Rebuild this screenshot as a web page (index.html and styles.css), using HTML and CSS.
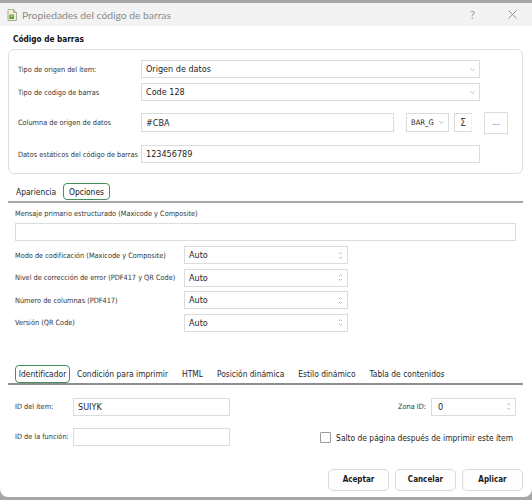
FILE: index.html
```html
<!DOCTYPE html>
<html lang="es">
<head>
<meta charset="utf-8">
<title>Propiedades del código de barras</title>
<link rel="stylesheet" href="styles.css">
</head>
<body>
<div class="dialog">
  <div class="titlebar">
    <svg class="app-icon" viewBox="0 0 10 12" width="10" height="12">
      <path d="M1 0.5 H6.5 L9.5 3.5 V11.5 H1 Z" fill="#f3eed6" stroke="#9a9a8a" stroke-width="0.8"/>
      <path d="M6.5 0.5 V3.5 H9.5" fill="none" stroke="#9a9a8a" stroke-width="0.8"/>
      <rect x="2.3" y="5.5" width="4.6" height="4.6" rx="0.6" fill="#5f9e3a"/>
      <rect x="3.3" y="6.5" width="2.6" height="1.2" fill="#b9dd8a"/>
    </svg>
    <span class="title">Propiedades del código de barras</span>
    <span class="help">?</span>
    <svg class="close" viewBox="0 0 9 9" width="9" height="9">
      <path d="M0.5 0.5 L8.5 8.5 M8.5 0.5 L0.5 8.5" stroke="#8a8a8a" stroke-width="0.9" fill="none"/>
    </svg>
  </div>

  <div class="content">
    <div class="section-title">Código de barras</div>

    <div class="group">
      <div class="row row-1">
        <span class="lbl lbl-main">Tipo de origen del ítem:</span>
        <div class="field select w-wide"><span class="val">Origen de datos</span><svg class="chev" viewBox="0 0 5 3" width="5" height="3"><path d="M0.5 0.5 L2.5 2.5 L4.5 0.5" fill="none" stroke="#a0a0a0" stroke-width="0.7"/></svg></div>
      </div>
      <div class="row row-2">
        <span class="lbl lbl-main">Tipo de codigo de barras</span>
        <div class="field select w-wide"><span class="val">Code 128</span><svg class="chev" viewBox="0 0 5 3" width="5" height="3"><path d="M0.5 0.5 L2.5 2.5 L4.5 0.5" fill="none" stroke="#a0a0a0" stroke-width="0.7"/></svg></div>
      </div>
      <div class="row row-3">
        <span class="lbl lbl-main">Columna de origen de datos</span>
        <div class="field w-col"><span class="val">#CBA</span></div>
        <div class="field select w-bar"><span class="val small">BAR_G</span><svg class="chev" viewBox="0 0 5 3" width="5" height="3"><path d="M0.5 0.5 L2.5 2.5 L4.5 0.5" fill="none" stroke="#a0a0a0" stroke-width="0.7"/></svg></div>
        <div class="field sigma">Σ</div>
        <div class="dots-btn">...</div>
      </div>
      <div class="row row-4">
        <span class="lbl lbl-main">Datos estáticos del código de barras</span>
        <div class="field w-wide"><span class="val">123456789</span></div>
      </div>
    </div>

    <div class="tabs tabs-top">
      <div class="tab tab-first">Apariencia</div>
      <div class="tab tab-active">Opciones</div>
    </div>

    <div class="panel options">
      <div class="lbl msg-lbl">Mensaje primario estructurado (Maxicode y Composite)</div>
      <div class="field w-msg"></div>
      <div class="spin-rows">
        <div class="row">
          <span class="lbl lbl-opt">Modo de codificación (Maxicode y Composite)</span>
          <div class="field spin w-spin"><span class="val">Auto</span><svg class="arrows" viewBox="0 0 5 9" width="5" height="9"><path d="M1 3 L2.5 1.5 L4 3 M1 6 L2.5 7.5 L4 6" fill="none" stroke="#a0a0a0" stroke-width="0.7"/></svg></div>
        </div>
        <div class="row">
          <span class="lbl lbl-opt">Nivel de corrección de error (PDF417 y QR Code)</span>
          <div class="field spin w-spin"><span class="val">Auto</span><svg class="arrows" viewBox="0 0 5 9" width="5" height="9"><path d="M1 3 L2.5 1.5 L4 3 M1 6 L2.5 7.5 L4 6" fill="none" stroke="#a0a0a0" stroke-width="0.7"/></svg></div>
        </div>
        <div class="row">
          <span class="lbl lbl-opt">Número de columnas (PDF417)</span>
          <div class="field spin w-spin"><span class="val">Auto</span><svg class="arrows" viewBox="0 0 5 9" width="5" height="9"><path d="M1 3 L2.5 1.5 L4 3 M1 6 L2.5 7.5 L4 6" fill="none" stroke="#a0a0a0" stroke-width="0.7"/></svg></div>
        </div>
        <div class="row">
          <span class="lbl lbl-opt">Versión (QR Code)</span>
          <div class="field spin w-spin"><span class="val">Auto</span><svg class="arrows" viewBox="0 0 5 9" width="5" height="9"><path d="M1 3 L2.5 1.5 L4 3 M1 6 L2.5 7.5 L4 6" fill="none" stroke="#a0a0a0" stroke-width="0.7"/></svg></div>
        </div>
      </div>
    </div>

    <div class="tabs tabs-bottom">
      <div class="tab2 tab2-active">Identificador</div>
      <div class="tab2">Condición para imprimir</div>
      <div class="tab2">HTML</div>
      <div class="tab2">Posición dinámica</div>
      <div class="tab2">Estilo dinámico</div>
      <div class="tab2">Tabla de contenidos</div>
    </div>

    <div class="panel ident">
      <div class="id-row id-row-1">
        <div class="id-left">
          <span class="lbl lbl-id">ID del ítem:</span>
          <div class="field w-id"><span class="val">SUIYK</span></div>
        </div>
        <div class="id-right">
          <span class="lbl zona-lbl">Zona ID:</span>
          <div class="field spin w-zona"><span class="val">0</span><svg class="arrows" viewBox="0 0 5 9" width="5" height="9"><path d="M1 3 L2.5 1.5 L4 3 M1 6 L2.5 7.5 L4 6" fill="none" stroke="#a0a0a0" stroke-width="0.7"/></svg></div>
        </div>
      </div>
      <div class="id-row id-row-2">
        <div class="id-left">
          <span class="lbl lbl-id">ID de la función:</span>
          <div class="field w-id"></div>
        </div>
        <label class="check">
          <span class="box"></span>
          <span class="check-text">Salto de página después de imprimir este ítem</span>
        </label>
      </div>
    </div>

    <div class="buttons">
      <button class="btn btn-ok">Aceptar</button>
      <button class="btn btn-cancel">Cancelar</button>
      <button class="btn btn-apply">Aplicar</button>
    </div>
  </div>
</div>
</body>
</html>
```

FILE: styles.css
```css
html, body {
  margin: 0;
  padding: 0;
}

body {
  width: 532px;
  height: 500px;
  overflow: hidden;
  background: #a7a7a7;
  font-family: "DejaVu Sans Condensed", "DejaVu Sans", sans-serif;
  font-stretch: condensed;
  color: #222;
}

.dialog {
  margin-top: 3px;
  height: 494px;
  background: #ffffff;
  border-radius: 0 0 8px 8px;
  overflow: hidden;
}

/* ---------- title bar ---------- */
.titlebar {
  height: 23px;
  background: #f3f3f3;
  display: flex;
  align-items: center;
  padding-left: 7px;
}

.app-icon {
  width: 10px;
  height: 12px;
  margin-right: 5px;
  flex: none;
}

.title {
  flex: 1;
  font-family: "Lato", "Noto Sans", sans-serif;
  font-stretch: normal;
  font-size: 10.3px;
  color: #8a8a8a;
  white-space: nowrap;
}

.help {
  font-family: "Lato", sans-serif;
  font-stretch: normal;
  font-size: 11px;
  color: #9a9a9a;
  margin-right: 33px;
}

.close {
  width: 9px;
  height: 9px;
  margin-right: 15px;
  flex: none;
}

/* ---------- content ---------- */
.content {
  padding: 0 9px 0 8px;
}

.section-title {
  margin: 7px 0 0 5px;
  height: 13px;
  line-height: 13px;
  font-weight: bold;
  font-size: 8.2px;
  color: #111;
}

.group {
  margin-top: 3px;
  border: 1px solid #dedede;
  border-radius: 6px;
  padding: 10px 0 10px 9px;
}

.row {
  display: flex;
  align-items: center;
}

.row-1 { height: 18px; }
.row-2 { height: 18px; margin-top: 5px; }
.row-3 { height: 19px; margin-top: 12px; }
.row-4 { height: 18px; margin-top: 13px; }

.lbl {
  font-size: 7.3px;
  color: #333;
  white-space: nowrap;
}

.lbl-main {
  width: 123px;
  flex: none;
}

.field {
  box-sizing: border-box;
  height: 18px;
  border: 1px solid #dcdcdc;
  background: #fff;
  display: flex;
  align-items: center;
  padding: 0 4px;
  flex: none;
}

.row-3 .field { height: 19px; }

.val {
  flex: 1;
  font-size: 9px;
  color: #1e1e1e;
  white-space: nowrap;
}

.val.small {
  font-size: 7.6px;
}

.chev {
  width: 5px;
  height: 3px;
  flex: none;
}

.w-wide { width: 339px; }
.w-col { width: 253px; margin-right: 12px; }
.w-bar { width: 43px; margin-right: 5px; padding-right: 4px; }

.sigma {
  width: 18px;
  justify-content: center;
  font-size: 10px;
  color: #444;
  border-right-color: #f0f0f0;
  margin-right: 12px;
}

.dots-btn {
  box-sizing: border-box;
  width: 24px;
  height: 22px;
  border: 1px solid #dcdcdc;
  display: flex;
  align-items: center;
  justify-content: center;
  font-size: 8px;
  color: #333;
  flex: none;
}

/* ---------- tabs ---------- */
.tabs {
  display: flex;
  align-items: flex-end;
}

.tabs-top {
  margin-top: 9px;
  border-bottom: 2px solid #a6a6a6;
  height: 18px;
}

.tab {
  box-sizing: border-box;
  height: 17px;
  margin-bottom: 1px;
  display: flex;
  align-items: center;
  font-size: 8.4px;
  color: #222;
  white-space: nowrap;
}

.tab-first {
  margin-left: 8px;
  width: 47px;
}

.tab-active {
  width: 47px;
  justify-content: center;
  border: 1px solid #43905f;
  border-radius: 4px;
  color: #111;
}

.panel.options {
  padding: 0 7px;
}

.msg-lbl {
  margin-top: 6px;
  height: 10px;
  line-height: 10px;
}

.w-msg {
  width: 501px;
  margin-top: 4px;
}

.spin-rows {
  margin-top: 5px;
  display: flex;
  flex-direction: column;
  gap: 4.67px;
}

.spin-rows .row {
  height: 18px;
}

.lbl-opt {
  width: 169px;
  flex: none;
}

.w-spin {
  width: 164px;
}

.spin {
  padding-right: 4px;
}

.arrows {
  width: 5px;
  height: 9px;
  flex: none;
}

.tabs-bottom {
  margin-top: 33px;
  border-bottom: 2px solid #8e8e8e;
  height: 18px;
}

.tab2 {
  box-sizing: border-box;
  height: 18px;
  display: flex;
  align-items: center;
  padding: 0 7px;
  font-size: 8.4px;
  color: #1e1e1e;
  white-space: nowrap;
}

.tab2-active {
  margin-left: 7px;
  padding: 0 3px;
  width: 55px;
  border: 1px solid #43905f;
  border-radius: 4px;
  justify-content: center;
}

/* ---------- identifier panel ---------- */
.panel.ident {
  padding: 0 7px;
}

.id-row {
  display: flex;
  align-items: center;
  justify-content: space-between;
  height: 18px;
}

.id-row-1 { margin-top: 13px; }
.id-row-2 { margin-top: 12px; }

.id-left,
.id-right {
  display: flex;
  align-items: center;
}

.lbl-id {
  width: 58px;
  flex: none;
}

.w-id {
  width: 157px;
}

.zona-lbl {
  margin-right: 5px;
}

.w-zona {
  width: 85px;
  padding-left: 6px;
}

.check {
  display: flex;
  align-items: center;
  margin-right: 3px;
  margin-top: 2px;
}

.box {
  box-sizing: border-box;
  width: 11px;
  height: 11px;
  border: 1px solid #9a9a9a;
  border-radius: 1px;
  background: #fff;
  margin-right: 5px;
}

.check-text {
  font-size: 8.4px;
  color: #1e1e1e;
  white-space: nowrap;
}

/* ---------- buttons ---------- */
.buttons {
  margin-top: 23px;
  display: flex;
  justify-content: flex-end;
  gap: 6px;
}

.btn {
  box-sizing: border-box;
  width: 61px;
  height: 22px;
  border: 1px solid #d9d9d9;
  border-radius: 5px;
  background: #fefefe;
  font-family: "DejaVu Sans Condensed", "DejaVu Sans", sans-serif;
  font-stretch: condensed;
  font-weight: bold;
  font-size: 8px;
  color: #1a1a1a;
  padding: 0;
}
```
